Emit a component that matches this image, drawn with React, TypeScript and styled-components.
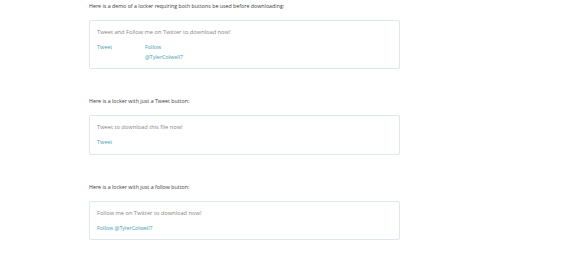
import React from 'react';
import styled, { createGlobalStyle } from 'styled-components';

const GlobalStyle = createGlobalStyle`
  html, body {
    margin: 0;
    padding: 0;
    background: #ffffff;
  }
  body {
    font-family: 'Open Sans', 'Liberation Sans', sans-serif;
  }
`;

const Page = styled.div`
  padding: 2px 0 0 89px;
  width: 311px;
`;

const Section = styled.section`
  margin-bottom: 28px;
`;

const Intro = styled.p`
  margin: 0 0 10px;
  font-size: 5.3px;
  line-height: 8px;
  color: #3a3a3a;
`;

const Locker = styled.div`
  border: 1px solid #dce8ec;
  border-radius: 2px;
  padding: 7px 7px 6px;
`;

const Heading = styled.div`
  font-size: 5.7px;
  line-height: 8px;
  color: #868686;
  margin-bottom: 7px;
`;

const Buttons = styled.div`
  display: flex;
`;

const Column = styled.div<{ $width?: number }>`
  display: flex;
  flex-direction: column;
  width: ${(p) => (p.$width ? `${p.$width}px` : 'auto')};
`;

const Link = styled.a`
  font-size: 5.4px;
  line-height: 9.5px;
  color: #459cb0;
  text-decoration: none;
`;

export default function App() {
  return (
    <>
      <GlobalStyle />
      <Page>
        <Section>
          <Intro>
            Here is a demo of a locker requiring both buttons be used before
            downloading:
          </Intro>
          <Locker>
            <Heading>Tweet and Follow me on Twitter to download now!</Heading>
            <Buttons>
              <Column $width={48}>
                <Link href="#">Tweet</Link>
              </Column>
              <Column>
                <Link href="#">Follow</Link>
                <Link href="#">@TylerColwell7</Link>
              </Column>
            </Buttons>
          </Locker>
        </Section>
        <Section>
          <Intro>Here is a locker with just a Tweet button:</Intro>
          <Locker>
            <Heading>Tweet to download this file now!</Heading>
            <Buttons>
              <Link href="#">Tweet</Link>
            </Buttons>
          </Locker>
        </Section>
        <Section>
          <Intro>Here is a locker with just a follow button:</Intro>
          <Locker>
            <Heading>Follow me on Twitter to download now!</Heading>
            <Buttons>
              <Link href="#">Follow @TylerColwell7</Link>
            </Buttons>
          </Locker>
        </Section>
      </Page>
    </>
  );
}
